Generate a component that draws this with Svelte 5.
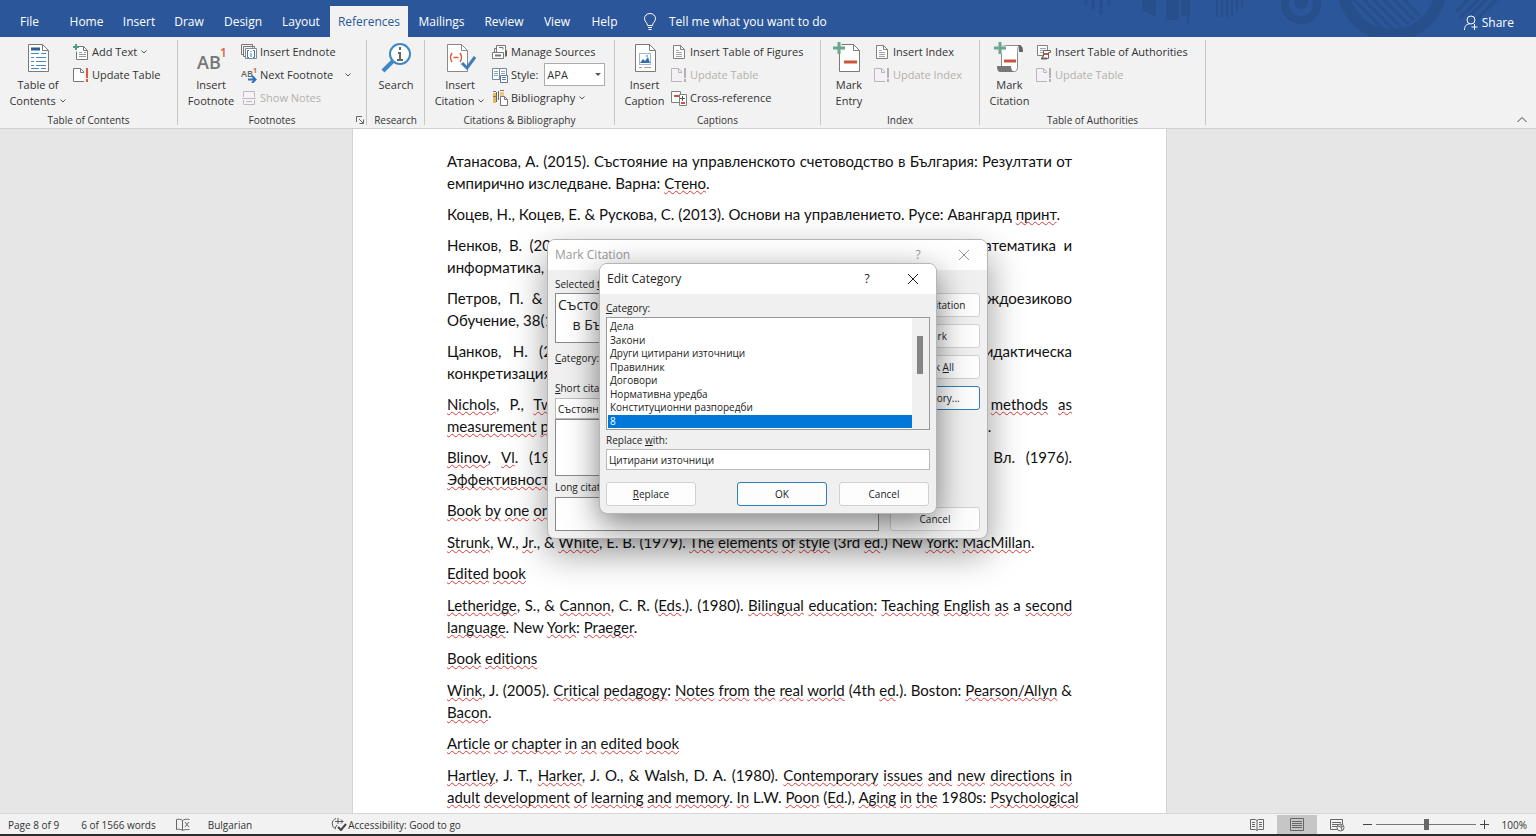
<script lang="ts">
	type Piece = { pre: string; word: string; post: string; wrong: boolean };

	const tabs = [
		'File',
		'Home',
		'Insert',
		'Draw',
		'Design',
		'Layout',
		'References',
		'Mailings',
		'Review',
		'View',
		'Help'
	];

	const activeTab = 'References';

	// Words that start with ~ are flagged by the spelling checker.
	const paragraphs: { lines: string[]; heading?: boolean }[] = [
		{
			lines: [
				'Атанасова, А. (2015). Състояние на управленското счетоводство в България: Резултати от',
				'емпирично изследване. Варна: ~Стено.'
			]
		},
		{
			lines: ['Коцев, Н., Коцев, Е. & Рускова, С. (2013). Основи на управлението. Русе: Авангард ~принт.']
		},
		{
			lines: [
				'Ненков, В. (2012). Върху някои приложения на геометрията. Списание Математика и',
				'информатика, 55(2), 158-165.'
			]
		},
		{
			lines: [
				'Петров, П. & Иванова, М. (2011). Обучение по роден език. Списание Чуждоезиково',
				'Обучение, 38(1), 12-24.'
			]
		},
		{
			lines: [
				'Цанков, Н. (2010). Модел на компетентностите и неговата учебна дидактическа',
				'конкретизация. Благоевград.'
			]
		},
		{
			lines: [
				"~Nichols, P., ~Twing, J., ~Mueller, C. & ~O'Malley, K. (2010). ~Standard ~setting ~methods ~as",
				'~measurement ~processes. ~Educational ~Measurement: Issues and ~Practice, 29, 14-24.'
			]
		},
		{
			lines: [
				'~Blinov, ~Vl. (1976). ~Effectiveness of the educational processes in. Блинов, Вл. (1976).',
				'~Эффективность ~учебного процесса.'
			]
		},
		{ lines: ['~Book ~by ~one ~or ~more ~authors'], heading: true },
		{
			lines: [
				'~Strunk, W., ~Jr., & ~White, E. B. (1979). ~The ~elements ~of ~style (3rd ~ed.) New ~York: ~MacMillan.'
			]
		},
		{ lines: ['~Edited ~book'], heading: true },
		{
			lines: [
				'~Letheridge, S., & ~Cannon, C. R. (~Eds.). (1980). ~Bilingual ~education: ~Teaching ~English ~as a ~second',
				'~language. New ~York: ~Praeger.'
			]
		},
		{ lines: ['~Book ~editions'], heading: true },
		{
			lines: [
				'~Wink, J. (2005). ~Critical ~pedagogy: ~Notes ~from ~the ~real ~world (4th ~ed.). Boston: ~Pearson/Allyn &',
				'~Bacon.'
			]
		},
		{ lines: ['~Article ~or ~chapter ~in ~an ~edited ~book'], heading: true },
		{
			lines: [
				'~Hartley, J. T., ~Harker, J. O., & Walsh, D. A. (1980). ~Contemporary ~issues ~and ~new ~directions ~in',
				'~adult ~development ~of ~learning ~and ~memory. ~In L.W. ~Poon (~Ed.), ~Aging ~in ~the 1980s: ~Psychological',
				'~Issues (pp. 200-253). ~Washington, D.C. ~American ~Psychological ~Association.'
			]
		}
	];

	const categories = [
		'Дела',
		'Закони',
		'Други цитирани източници',
		'Правилник',
		'Договори',
		'Нормативна уредба',
		'Конституционни разпоредби',
		'8'
	];

	let selected = $state('8');
	let replaceWith = $state('Цитирани източници');
	let zoom = $state(100);
	let style = $state('APA');

	const toPieces = (line: string): Piece[] =>
		line.split(' ').map((token) => {
			const wrong = token.includes('~');
			const match = token.replace('~', '').match(/^(\(?)(.*?)([,:.)]*)$/);
			return { pre: match?.[1] ?? '', word: match?.[2] ?? '', post: match?.[3] ?? '', wrong };
		});
</script>

{#snippet page(stroke: string)}
	<path d="M2.5 1.5h7l4 4v9h-11z" fill="#fff" {stroke} />
	<path d="M9.5 1.5v4h4" fill="none" {stroke} />
{/snippet}

{#snippet bigPage()}
	<path d="M6.500 2.500h14l6 6v21h-20z" fill="#fff" stroke="#7a7a7a" />
	<path d="M20.500 2.500v6h6" fill="none" stroke="#7a7a7a" />
{/snippet}

{#snippet bigIcon(name: string)}
	<svg class="big-icon" viewBox="0 0 32 32" width="32" height="32" aria-hidden="true">
		{#if name === 'toc'}
			<path d="M6.500 2.500h14l6 6v21h-20z" fill="#fff" stroke="#7a7a7a" />
			<path d="M20.500 2.500v6h6" fill="none" stroke="#7a7a7a" />
			<path d="M9 7h9" stroke="#2f5f97" stroke-width="3" />
			<path d="M9 11.500h8M9 15.500h3M9 19.500h3M9 23.500h3M9 26.500h8" stroke="#4a86c0" />
			<path d="M19 11.500h5M14 15.500h10M14 19.500h10M14 23.500h10M19 26.500h5" stroke="#4a86c0" />
		{:else if name === 'footnote'}
			<text x="2" y="27" font-size="18" font-weight="600" fill="#757575">AB</text>
			<text x="25" y="15" font-size="12" font-weight="600" fill="#d9603f">1</text>
		{:else if name === 'search'}
			<path d="M3 29 13 19" stroke="#3f86c6" stroke-width="4" />
			<circle cx="20" cy="12" r="10" fill="#fff" stroke="#3f86c6" stroke-width="2" />
			<path d="M20 5v3M18 11h2v7M17 18h6" fill="none" stroke="#666" stroke-width="2" />
		{:else if name === 'citation'}
			<path d="M3.500 2.500h14l6 6v21h-20z" fill="#fff" stroke="#8a8a8a" />
			<path d="M17.500 2.500v6h6" fill="none" stroke="#8a8a8a" />
			<path
				d="M8 11c-2 3-2 6 0 9M16 11c2 3 2 6 0 9M9.500 15.500h5"
				fill="none"
				stroke="#d9603f"
				stroke-width="1.500"
			/>
			<path d="m18 21 5 5 8-11" fill="none" stroke="#3f7cb8" stroke-width="3" />
		{:else if name === 'caption'}
			{@render bigPage()}
			<rect x="10.500" y="11.500" width="11" height="11" fill="#fff" stroke="#9db7d3" />
			<path d="m11 21 3-4 2 2 3-4 2 6z" fill="#2f6db0" />
			<path d="M17 14h2" stroke="#2f6db0" />
			<path d="M10 25.500h3M15 25.500h7" stroke="#d98a75" />
		{:else if name === 'entry'}
			{@render bigPage()}
			<path d="M11 20h13" stroke="#c9553a" stroke-width="3" />
			<path d="M6 0v12M0 6h12" stroke="#f2f2f2" stroke-width="5" />
			<path d="M6 0v12M0 6h12" stroke="#6fa58e" stroke-width="3" />
		{:else if name === 'mark'}
			<path d="M7.500 3.500h19c-3 1-3 4-3 7v15c0 2-1 4-3 4h-13z" fill="#fff" stroke="#8a8a8a" />
			<path d="M24 3c4 0 5 2 5 7h-4c0-3 0-5-1-7z" fill="#666" />
			<path d="M3 24h14c0 3 1 5 3 6H7c-3 0-4-2-4-6z" fill="#777" />
			<path d="M10 19h12" stroke="#c9553a" stroke-width="3" />
			<path d="M6 0v12M0 6h12" stroke="#f2f2f2" stroke-width="5" />
			<path d="M6 0v12M0 6h12" stroke="#6fa58e" stroke-width="3" />
		{/if}
	</svg>
{/snippet}

{#snippet icon(name: string)}
	<svg class="icon" viewBox="0 0 16 16" width="16" height="16" aria-hidden="true">
		{#if name === 'add'}
			<path d="M4.500 2.500h6l4 4v9h-11v-8" fill="#fff" stroke="#777" />
			<path d="M10.500 2.500v4h4" fill="none" stroke="#777" />
			<path d="M6 8.500h3M11 8.500h2M6 10.500h7M6 12.500h7" stroke="#999" />
			<path d="M3 0v6M0 3h6" stroke="#4fa083" stroke-width="2" />
		{:else if name === 'update' || name === 'update-off'}
			<path
				d="M.500 1.500h7l4 4v9H.500z"
				fill={name === 'update' ? '#fff' : '#f5f0f5'}
				stroke={name === 'update' ? '#777' : '#bcb4bc'}
			/>
			<path d="M7.500 1.500v4h4" fill="none" stroke={name === 'update' ? '#777' : '#bcb4bc'} />
			<path d="M13 0v16" stroke="#f2f2f2" stroke-width="4" />
			<path
				d="M14 1v10M14 12v3"
				stroke={name === 'update' ? '#e0583a' : '#b5b0b5'}
				stroke-width="2"
			/>
		{:else if name === 'endnote'}
			<path d="M3 10.500H.500v-10h11v3" fill="none" stroke="#777" />
			<path d="M4 12.500H2.500v-10h11v3" fill="none" stroke="#777" />
			<path d="M4.500 14.500v-10h11v10z" fill="#fff" stroke="#888" />
			<path d="M8 6.500H6.500v7H8M12 6.500h1.500v7H12M10 9v4M10 7v1" fill="none" stroke="#3a76b8" />
		{:else if name === 'next'}
			<text x="0" y="10" font-size="9" font-weight="600" fill="#666">AB</text>
			<text x="12" y="6" font-size="7" font-weight="700" fill="#d9603f">1</text>
			<path d="M7 12.500h7M11 9l3.500 3.500L11 16" fill="none" stroke="#2f72b8" stroke-width="2" />
		{:else if name === 'notes'}
			<path d="M2.500 7V1.500h11V7M2.500 10v4.500h11V10" fill="#f7f2f7" stroke="#c2b8c2" />
			<path d="M1 8.500h14M5 11.500h6" stroke="#c2b8c2" />
		{:else if name === 'sources'}
			<path d="M4.500 8V1.500h9V8" fill="#fff" stroke="#777" />
			<path d="M2.500 9V4.500h2M7 3.500h4v2" fill="none" stroke="#777" />
			<path d="M.500 8.500h11v6H.500z" fill="#fff" stroke="#777" />
			<path d="M3 11.500h6" stroke="#777" stroke-width="2" />
			<path d="M13 13V7l2-1v6z" fill="#666" />
		{:else if name === 'style'}
			<path d="M.500 1.500h7v11h-7zM7.500 1.500h7v11h-7z" fill="#fff" stroke="#7089a5" />
			<path d="M2 4.500h4M2 6.500h4M2 8.500h4M9 4.500h4M9 6.500h4" stroke="#8ea7c2" />
			<path d="M8.500 8.500h7v7h-7z" fill="#fff" stroke="#5f7d9d" />
			<path d="M10 10.500h4M10 12.500h4" stroke="#5f7d9d" />
		{:else if name === 'books'}
			<path d="M1 3h3v10H1z" fill="#e8b860" />
			<path d="M4.500 2v10M6.500 1v9" stroke="#666" />
			<path d="M8 2h4v5H8z" fill="#f0c67a" />
			<path d="M1 1.500h3M8 .500h4M1 6.500h3" stroke="#777" />
			<path d="M8.500 6.500h4l3 3v6h-7z" fill="#fff" stroke="#777" />
			<path d="M12.500 6.500v3h3" fill="none" stroke="#777" />
		{:else if name === 'lines'}
			{@render page('#808080')}
			<path d="M5 6.500h3M5 8.500h6M5 10.500h6M5 12.500h6" stroke="#a5a5a5" />
		{:else if name === 'cross'}
			<path d="M.500 1.500h9v11h-9z" fill="#fff" stroke="#808080" />
			<path d="M8.500 4.500h7v11h-7z" fill="#fff" stroke="#808080" />
			<path d="M3 6h5M10 13h4" stroke="#c9553a" stroke-width="2" />
			<path d="M11.500 6v5M9 8.500h5" stroke="#555" />
		{:else if name === 'authorities'}
			<path d="M7 11.500H1.500v-10h10V6" fill="#fff" stroke="#808080" />
			<path d="M4 4.500h6M4 6.500h4M4 8.500h3" stroke="#a5a5a5" />
			<path d="M7.500 6.500h7v2h-2v6h-6v-2h1z" fill="#fff" stroke="#666" />
			<path d="M8 10h4" stroke="#c9553a" stroke-width="2" />
			<path d="M5 14.500h6" stroke="#666" stroke-width="2" />
		{/if}
	</svg>
{/snippet}

{#snippet caret()}
	<svg class="caret" viewBox="0 0 8 8" width="8" height="8" aria-hidden="true">
		<path d="M1.500 2.500 4 5l2.500-2.500" fill="none" stroke="#555" />
	</svg>
{/snippet}

{#snippet small(name: string, label: string, arrow = false, off = false)}
	<button class="small" disabled={off}>
		{@render icon(name)}
		<span>{label}</span>
		{#if arrow}{@render caret()}{/if}
	</button>
{/snippet}

{#snippet big(name: string, first: string, second = '', arrow = false)}
	<button class="big">
		{@render bigIcon(name)}
		<span>{first}</span>
		{#if second}
			<span>{second}{#if arrow}&nbsp;{@render caret()}{/if}</span>
		{/if}
	</button>
{/snippet}

{#snippet closeIcon()}
	<svg viewBox="0 0 12 12" width="12" height="12" aria-hidden="true">
		<path d="m1 1 10 10M11 1 1 11" stroke="currentColor" />
	</svg>
{/snippet}

<div class="app">
	<header class="titlebar">
		<svg class="pattern" viewBox="0 0 456 37" width="456" height="37" aria-hidden="true">
			<g fill="none" stroke="#264f8c">
				<path d="M6 0v5M13 0v10M21 0v15M29 0v6" stroke-width="3" />
				<path d="M108 0v24M137 0v17M142 0v17M147 0v18M152 0v16M157 0v12M162 0v8" stroke-width="2" />
				<circle cx="221" cy="4" r="16" stroke-width="8" />
				<circle cx="312" cy="-14" r="49" stroke-width="12" />
				<path
					d="m270-4 36 36M280-4l34 34M290-4l32 32M300-4l28 28M310-4l24 24M320-4l20 20"
					stroke-width="3"
				/>
				<path d="m376 12 16-16M380 18l22-22M387 19l23-23M396 20l24-24" stroke-width="3" />
			</g>
			<path d="M62 0h14v17L62 10zM86 0h13v20H86zM101 0h9v16h-9z" fill="#264f8c" />
			<circle cx="221" cy="2" r="7" fill="#264f8c" />
		</svg>
		<nav class="tabs" aria-label="Ribbon tabs">
			{#each tabs as tab}
				<button class="tab" class:active={tab === activeTab}>{tab}</button>
			{/each}
		</nav>
		<button class="tell">
			<svg viewBox="0 0 14 18" width="14" height="18" aria-hidden="true">
				<path
					d="M4.500 12.500c0-3-3-3.500-3-7a5.500 5 0 0 1 11 0c0 3.500-3 4-3 7zM5 14.500h4M5.500 16.500h3"
					fill="none"
					stroke="#fff"
				/>
			</svg>
			Tell me what you want to do
		</button>
		<button class="share">
			<svg viewBox="0 0 14 16" width="14" height="16" aria-hidden="true">
				<circle cx="7" cy="5" r="4" fill="none" stroke="#fff" />
				<path d="M.500 15c0-4 2-6 5-6M10.500 9v6M7.500 12h6" fill="none" stroke="#fff" />
			</svg>
			Share
		</button>
	</header>

	<section class="ribbon" aria-label="References">
		<div class="group g-toc">
			<div class="tools">
				{@render big('toc', 'Table of', 'Contents', true)}
				<div class="stack">
					{@render small('add', 'Add Text', true)}
					{@render small('update', 'Update Table')}
				</div>
			</div>
			<div class="group-name">Table of Contents</div>
		</div>
		<div class="group g-foot">
			<div class="tools">
				{@render big('footnote', 'Insert', 'Footnote')}
				<div class="stack">
					{@render small('endnote', 'Insert Endnote')}
					<div class="split">
						{@render small('next', 'Next Footnote')}
						<button class="drop" aria-label="More footnote moves">{@render caret()}</button>
					</div>
					{@render small('notes', 'Show Notes', false, true)}
				</div>
			</div>
			<div class="group-name">
				Footnotes
				<button class="launcher" aria-label="Footnote settings">
					<svg viewBox="0 0 8 8" width="8" height="8" aria-hidden="true">
						<path d="M.500 6V.500H6M3 3l4 4M7.500 3.500v4h-4" fill="none" stroke="#666" />
					</svg>
				</button>
			</div>
		</div>
		<div class="group g-search">
			<div class="tools">{@render big('search', 'Search')}</div>
			<div class="group-name">Research</div>
		</div>
		<div class="group g-cite">
			<div class="tools">
				{@render big('citation', 'Insert', 'Citation', true)}
				<div class="stack">
					{@render small('sources', 'Manage Sources')}
					<label class="style-row">
						{@render icon('style')}
						<span>Style:</span>
						<span class="select-wrap">
							<select bind:value={style}>
								<option>APA</option>
								<option>MLA</option>
							</select>
						</span>
					</label>
					{@render small('books', 'Bibliography', true)}
				</div>
			</div>
			<div class="group-name">Citations &amp; Bibliography</div>
		</div>
		<div class="group g-caption">
			<div class="tools">
				{@render big('caption', 'Insert', 'Caption')}
				<div class="stack">
					{@render small('lines', 'Insert Table of Figures')}
					{@render small('update-off', 'Update Table', false, true)}
					{@render small('cross', 'Cross-reference')}
				</div>
			</div>
			<div class="group-name">Captions</div>
		</div>
		<div class="group g-index">
			<div class="tools">
				{@render big('entry', 'Mark', 'Entry')}
				<div class="stack">
					{@render small('lines', 'Insert Index')}
					{@render small('update-off', 'Update Index', false, true)}
				</div>
			</div>
			<div class="group-name">Index</div>
		</div>
		<div class="group g-auth">
			<div class="tools">
				{@render big('mark', 'Mark', 'Citation')}
				<div class="stack">
					{@render small('authorities', 'Insert Table of Authorities')}
					{@render small('update-off', 'Update Table', false, true)}
				</div>
			</div>
			<div class="group-name">Table of Authorities</div>
		</div>
		<button class="collapse" aria-label="Collapse the ribbon">
			<svg viewBox="0 0 12 8" width="12" height="8" aria-hidden="true">
				<path d="m1.500 6 4.500-4.500L10.500 6" fill="none" stroke="#444" />
			</svg>
		</button>
	</section>

	<main class="workspace">
		<article class="paper">
			{#each paragraphs as { lines, heading }}
				<p class:heading>
					{#each lines as line, i}
						<span class="line" class:full={i < lines.length - 1}>
							{#each toPieces(line) as piece}
								{piece.pre}<span class:wrong={piece.wrong}>{piece.word}</span>{piece.post}{' '}
							{/each}
						</span>
					{/each}
				</p>
			{/each}
		</article>
	</main>

	<footer class="status">
		<span>Page 8 of 9</span>
		<span class="s-words">6 of 1566 words</span>
		<svg class="s-proof" viewBox="0 0 16 14" width="16" height="14" aria-hidden="true">
			<path
				d="M7.500 12.500C6 11 3 11 1.500 11.500v-10C3 1 6 1 7.500 2.500zM7.500 2.500C9 1 12 1 14.500 1.500M7.500 12.500c1.500-1 4-1 7-1M10 4l4 5M14 4l-4 5"
				fill="none"
				stroke="#666"
			/>
		</svg>
		<span class="s-lang">Bulgarian</span>
		<span class="s-access">
			<svg viewBox="0 0 16 14" width="16" height="14" aria-hidden="true">
				<path
					d="M5 1.500C0 3 0 10 5 12M7 1v6M4 4.500h8M10 2.500l2 2-2 2M6 8l-2 3"
					fill="none"
					stroke="#555"
				/>
				<path d="m7 10 3 3 5-6" fill="none" stroke="#444" stroke-width="2" />
			</svg>
			Accessibility: Good to go
		</span>
		<div class="views">
			<button class="view" aria-label="Read mode">
				<svg viewBox="0 0 16 14" width="16" height="14" aria-hidden="true">
					<path
						d="M8 2.500v10M1.500 1.500h5L8 2.500l1.500-1h5v10h-5L8 12.500l-1.500-1h-5zM3 4.500h3M3 6.500h3M3 8.500h3M10 4.500h3M10 6.500h3M10 8.500h3"
						fill="none"
						stroke="#666"
					/>
				</svg>
			</button>
			<button class="view on" aria-label="Print layout">
				<svg viewBox="0 0 16 14" width="16" height="14" aria-hidden="true">
					<path
						d="M1.500.500h13v12h-13zM3 3.500h10M3 5.500h10M3 7.500h10M3 9.500h10"
						fill="none"
						stroke="#666"
					/>
				</svg>
			</button>
			<button class="view" aria-label="Web layout">
				<svg viewBox="0 0 16 14" width="16" height="14" aria-hidden="true">
					<path
						d="M8 11.500H1.500v-10h12V6M3 4.500h9M3 6.500h6M3 8.500h5"
						fill="none"
						stroke="#666"
					/>
					<circle cx="11.500" cy="9.500" r="3.500" fill="#f2f2f2" stroke="#666" />
					<path d="m9 8 3 1 1 3M12 6v2l2 1" fill="none" stroke="#666" />
				</svg>
			</button>
		</div>
		<button class="step" aria-label="Zoom out">
			<svg viewBox="0 0 9 9" width="9" height="9" aria-hidden="true">
				<path d="M0 4.500h9" stroke="#444" />
			</svg>
		</button>
		<input class="zoom" type="range" min="0" max="200" bind:value={zoom} aria-label="Zoom" />
		<button class="step" aria-label="Zoom in">
			<svg viewBox="0 0 9 9" width="9" height="9" aria-hidden="true">
				<path d="M0 4.500h9M4.500 0v9" stroke="#444" />
			</svg>
		</button>
		<span class="s-zoom">{zoom}%</span>
	</footer>

	<div class="window mark-citation" role="dialog" aria-labelledby="mark-title">
		<div class="window-title">
			<h2 id="mark-title">Mark Citation</h2>
			<button aria-label="Help">?</button>
			<button aria-label="Close">{@render closeIcon()}</button>
		</div>
		<div class="mark-body">
			<div class="fields">
				<label for="selected-text">Selected <u>t</u>ext:</label>
				<textarea id="selected-text" class="chosen"
					>{'Състояние на управленското счетоводство\n    в България'}</textarea
				>
				<div class="category-row"><u>C</u>ategory: Цитирани източници</div>
				<label for="short-citation"><u>S</u>hort citation:</label>
				<input id="short-citation" class="short" value="Състояние на управленското" />
				<div class="short-list"></div>
				<label for="long-citation">Long citation:</label>
				<textarea id="long-citation" class="long"></textarea>
			</div>
			<div class="actions">
				<button class="btn"><u>N</u>ext Citation</button>
				<button class="btn"><u>M</u>ark</button>
				<button class="btn">Mark <u>A</u>ll</button>
				<button class="btn primary">Cate<u>g</u>ory...</button>
				<button class="btn last">Cancel</button>
			</div>
		</div>
	</div>

	<div class="window edit-category" role="dialog" aria-labelledby="edit-title">
		<div class="window-title">
			<h2 id="edit-title">Edit Category</h2>
			<button aria-label="Help">?</button>
			<button aria-label="Close">{@render closeIcon()}</button>
		</div>
		<div class="edit-body">
			<div id="category-label"><u>C</u>ategory:</div>
			<div class="listbox">
				<div class="options" role="listbox" aria-labelledby="category-label">
					{#each categories as category}
						<button
							class="option"
							role="option"
							aria-selected={category === selected}
							onclick={() => (selected = category)}>{category}</button
						>
					{/each}
				</div>
				<div class="track"><div class="thumb"></div></div>
			</div>
			<label for="replace-with">Replace <u>w</u>ith:</label>
			<input id="replace-with" class="replace" bind:value={replaceWith} />
			<div class="edit-actions">
				<button class="btn"><u>R</u>eplace</button>
				<button class="btn primary">OK</button>
				<button class="btn">Cancel</button>
			</div>
		</div>
	</div>
</div>

<style>
	:global(body) {
		margin: 0;
	}

	.app {
		position: relative;
		display: flex;
		flex-direction: column;
		height: 100vh;
		overflow: hidden;
		box-sizing: border-box;
		border-bottom: 2px solid #2b2b2b;
		background: #e6e6e6;
		color: #333;
		font-family: 'Open Sans', 'Noto Sans', sans-serif;
		font-size: 12px;
		line-height: 16px;
	}

	.app :global(*) {
		box-sizing: border-box;
	}

	button,
	input,
	select,
	textarea {
		margin: 0;
		padding: 0;
		border: 0;
		border-radius: 0;
		background: none;
		color: inherit;
		font: inherit;
	}

	svg {
		flex: none;
	}

	.titlebar {
		position: relative;
		display: flex;
		flex: none;
		height: 37px;
		background: #2b579a;
		color: #fff;
	}

	.pattern {
		position: absolute;
		top: 0;
		right: 0;
	}

	.tabs {
		display: grid;
		grid-template-columns: 59px 55px 50px 50px 58px 58px 78px 67px 58px 48px 47px;
		padding-top: 6px;
	}

	.tab {
		height: 31px;
		padding-top: 1px;
		white-space: nowrap;
	}

	.tab.active {
		background: #f2f2f2;
		color: #2b579a;
	}

	.tell,
	.share {
		position: relative;
		display: flex;
		align-items: center;
		padding-top: 6px;
	}

	.tell {
		gap: 12px;
		margin-left: 15px;
	}

	.share {
		gap: 4px;
		margin-left: auto;
		padding-right: 22px;
		padding-top: 8px;
	}

	.ribbon {
		display: flex;
		flex: none;
		height: 92px;
		padding-top: 3px;
		border-bottom: 1px solid #d2d0ce;
		background: #f2f2f2;
		font-size: 11px;
	}

	.group {
		display: flex;
		flex-direction: column;
		height: 85px;
		border-right: 1px solid #c8c6c4;
	}

	.g-toc {
		--big: 70px;
		width: 178px;
	}

	.g-foot {
		--big: 60px;
		width: 189px;
	}

	.g-search {
		--big: 52px;
		width: 58px;
	}

	.g-cite {
		--big: 64px;
		width: 190px;
	}

	.g-caption {
		--big: 53px;
		width: 206px;
	}

	.g-index {
		--big: 50px;
		width: 159px;
	}

	.g-auth {
		--big: 53px;
		width: 226px;
	}

	.tools {
		display: flex;
		flex: 1;
		padding-left: 3px;
	}

	.big {
		display: flex;
		flex-direction: column;
		align-items: center;
		width: var(--big);
		padding-top: 2px;
		white-space: nowrap;
	}

	.big-icon {
		margin-bottom: 3px;
	}

	.stack {
		display: grid;
		grid-template-rows: repeat(3, 23px);
		align-content: start;
		justify-items: start;
	}

	.small,
	.style-row {
		display: flex;
		align-items: center;
		gap: 3px;
		white-space: nowrap;
	}

	.small:disabled {
		color: #b3b0ad;
	}

	.split {
		display: flex;
		gap: 10px;
	}

	.drop {
		width: 10px;
	}

	.select-wrap {
		position: relative;
		display: block;
		margin-left: 3px;
	}

	.select-wrap::after {
		content: '';
		position: absolute;
		top: 10px;
		right: 4px;
		border: 3px solid transparent;
		border-top-color: #555;
		pointer-events: none;
	}

	select {
		width: 61px;
		height: 23px;
		padding-left: 2px;
		border: 1px solid #ababab;
		background: #fff;
		appearance: none;
	}

	.group-name {
		position: relative;
		font-size: 10px;
		line-height: 10px;
		text-align: center;
	}

	.launcher {
		position: absolute;
		right: 2px;
		bottom: 0;
	}

	.collapse {
		margin-left: auto;
		padding: 0 8px 0 0;
		align-self: flex-end;
	}

	.workspace {
		display: flex;
		flex: 1;
		justify-content: center;
		min-height: 0;
		overflow: hidden;
		padding-right: 17px;
	}

	.paper {
		width: 815px;
		padding: 21px 94px 0;
		border: solid #d4d4d4;
		border-width: 0 1px;
		background: #fff;
		color: #111;
		font-family: Lato, 'Open Sans', sans-serif;
		font-size: 15px;
		font-variant-ligatures: none;
		line-height: 22px;
	}

	p {
		margin: 0 0 9px;
	}

	p.heading {
		margin-bottom: 10px;
	}

	.line {
		display: block;
		white-space: nowrap;
	}

	.line.full {
		text-align: justify;
		text-align-last: justify;
	}

	.wrong {
		text-decoration: underline wavy #d83b3b 1px;
		text-underline-offset: 1px;
		text-decoration-skip-ink: none;
	}

	.status {
		display: flex;
		flex: none;
		align-items: center;
		height: 21px;
		padding: 1px 9px 0 8px;
		border-top: 1px solid #d5d5d5;
		background: #f2f2f2;
		font-size: 10px;
		white-space: nowrap;
	}

	.s-words {
		margin-left: 22px;
	}

	.s-proof {
		margin-left: 19px;
	}

	.s-lang {
		margin-left: 17px;
	}

	.s-access {
		display: flex;
		gap: 1px;
		margin-left: 79px;
	}

	.views {
		display: flex;
		align-self: stretch;
		margin-left: auto;
	}

	.view {
		display: grid;
		place-items: center;
		width: 40px;
	}

	.view.on {
		background: #c6c6c6;
	}

	.step {
		display: grid;
		place-items: center;
		width: 17px;
	}

	.views + .step {
		margin-left: 2px;
	}

	.zoom {
		width: 100px;
		height: 12px;
		appearance: none;
		background: linear-gradient(#777, #777) center / 100% 1px no-repeat;
	}

	.zoom::-webkit-slider-thumb {
		width: 5px;
		height: 11px;
		appearance: none;
		background: #666;
	}

	.s-zoom {
		width: 34px;
		text-align: right;
	}

	.window {
		position: absolute;
		left: 0;
		right: 0;
		margin: 0 auto;
		overflow: hidden;
		border: 1px solid #b5b5b5;
		border-radius: 8px;
		background: #f0f0f0;
		color: #222;
		font-size: 10px;
		line-height: 14px;
	}

	.mark-citation {
		top: 239px;
		right: 1px;
		width: 441px;
		box-shadow: 0 14px 36px rgba(0, 0, 0, 0.4);
	}

	.edit-category {
		top: 263px;
		width: 338px;
		box-shadow: 0 10px 32px rgba(0, 0, 0, 0.5);
	}

	.window-title {
		display: flex;
		align-items: center;
		height: 30px;
		padding-left: 7px;
		background: #fff;
	}

	.window-title h2 {
		flex: 1;
		margin: 0;
		font-size: 12px;
		font-weight: 400;
	}

	.window-title button {
		display: grid;
		place-items: center;
		width: 46px;
		height: 28px;
		font-size: 12px;
	}

	.mark-citation .window-title {
		color: #999;
	}

	.mark-body {
		display: flex;
		gap: 11px;
		padding: 7px;
	}

	.fields {
		display: flex;
		flex: 1;
		flex-direction: column;
	}

	textarea {
		border: 1px solid #8a8a8a;
		background: #fff;
		resize: none;
		overflow: hidden;
	}

	.chosen {
		height: 50px;
		margin-top: 2px;
		padding: 1px 2px;
		font-size: 14px;
		line-height: 20px;
		white-space: pre;
	}

	.category-row {
		margin: 8px 0 16px;
	}

	.short {
		height: 21px;
		margin-top: 3px;
		padding: 0 2px;
		border: 1px solid #bbb;
		background: #fff;
	}

	.short-list {
		height: 57px;
		margin-bottom: 4px;
		border: 1px solid #8a8a8a;
		background: #fff;
	}

	.long {
		height: 34px;
		margin-top: 3px;
	}

	.actions {
		display: flex;
		flex-direction: column;
		gap: 7px;
		padding-top: 16px;
	}

	.btn {
		width: 90px;
		height: 24px;
		border: 1px solid #d0d0d0;
		border-radius: 3px;
		background: #fdfdfd;
	}

	.btn.primary {
		border-color: #2f7fb8;
	}

	.btn.last {
		margin-top: auto;
	}

	.edit-body {
		display: flex;
		flex-direction: column;
		padding: 7px 6px;
	}

	.listbox {
		display: flex;
		height: 113px;
		margin: 2px 0 3px;
		border: 1px solid #999;
		background: #fff;
	}

	.options {
		display: grid;
		flex: 1;
		grid-template-rows: repeat(8, 1fr);
		padding: 2px 0 1px 1px;
	}

	.option {
		min-height: 0;
		padding-left: 2px;
		line-height: 13px;
		text-align: left;
	}

	.option[aria-selected='true'] {
		background: #0078d7;
		color: #fff;
	}

	.track {
		width: 17px;
		padding: 18px 6px 0 5px;
		background: #f0f0f0;
	}

	.thumb {
		height: 38px;
		background: #858585;
	}

	.replace {
		height: 21px;
		margin-top: 2px;
		padding: 0 2px;
		border: 1px solid #bbb;
		background: #fff;
	}

	.edit-actions {
		display: grid;
		grid-template-columns: 1fr 90px 90px;
		column-gap: 12px;
		padding: 12px 1px 0 0;
	}
</style>
